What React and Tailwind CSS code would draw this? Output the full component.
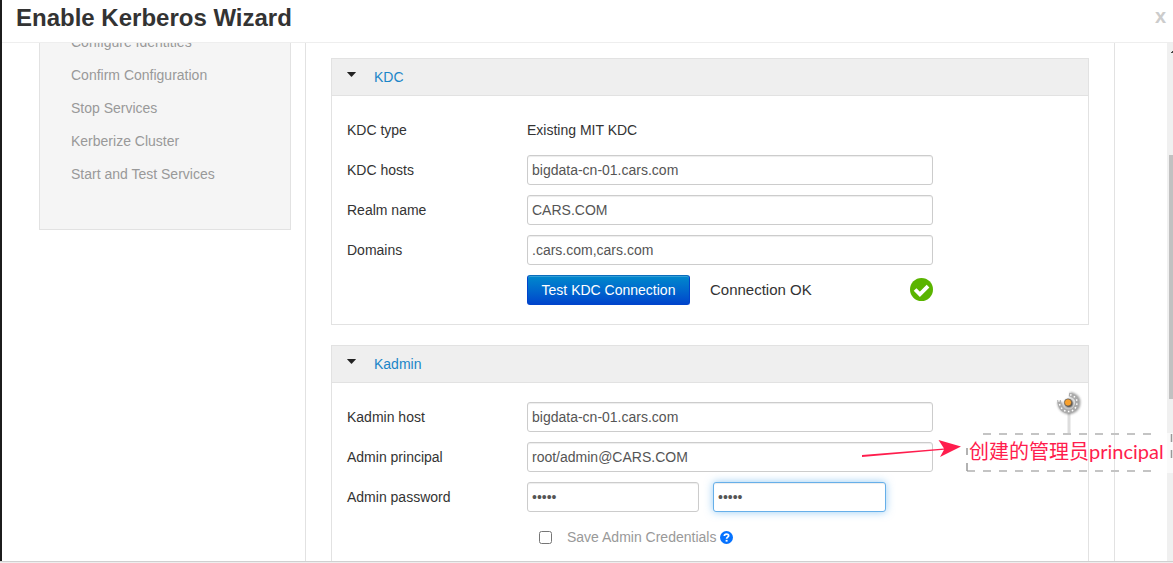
import React from "react";

const steps = [
  "Configure Identities",
  "Confirm Configuration",
  "Stop Services",
  "Kerberize Cluster",
  "Start and Test Services",
];

const fieldBase =
  "h-[30px] rounded-[3px] border px-1 text-sm text-[#555] bg-white outline-none ";
const fieldPlain =
  fieldBase + "border-[#ccc] shadow-[inset_0_1px_1px_rgba(0,0,0,0.075)]";
const fieldFocused =
  fieldBase +
  "border-[#66afe9] shadow-[inset_0_1px_1px_rgba(0,0,0,0.075),0_0_8px_rgba(82,168,236,0.6)]";

function Panel({ title, children }) {
  return (
    <section className="border border-[#e2e2e2]">
      <button
        type="button"
        className="flex h-[37px] w-full items-center border-b border-[#e2e2e2] bg-[#efefef] px-[15px] text-left text-sm text-[#1b86c8]"
      >
        <svg className="mb-[5px] mr-[18px] h-[5px] w-[9px]" viewBox="0 0 9 5" fill="#222" aria-hidden="true">
          <path d="M0.500 0h8q.5 0 .2.500L5 4.500q-.5.500-1 0L.3.500Q0 0 .5 0z" />
        </svg>
        {title}
      </button>
      <div className="flex flex-col gap-[10px] px-[15px] py-[19px]">{children}</div>
    </section>
  );
}

function Row({ label, htmlFor, children }) {
  const Label = htmlFor ? "label" : "span";
  return (
    <div className="flex h-[30px] items-center">
      <Label htmlFor={htmlFor} className="w-[180px] shrink-0">
        {label}
      </Label>
      <div className="flex w-[406px] items-center">{children}</div>
    </div>
  );
}

function TextRow({ label, id, value }) {
  return (
    <Row label={label} htmlFor={id}>
      <input id={id} type="text" defaultValue={value} className={fieldPlain + " w-full"} />
    </Row>
  );
}

function Annotation() {
  return (
    <div className="pointer-events-none absolute left-[860px] top-[390px]">
      <svg width="313" height="90" viewBox="0 0 313 90" aria-hidden="true">
        <defs>
          <filter id="soft" x="-50%" y="-50%" width="200%" height="200%">
            <feGaussianBlur stdDeviation="1.1" />
          </filter>
        </defs>
        <rect x="307" y="43" width="6" height="40" fill="#fafafa" />
        <g fill="none" stroke="#c4c4c4" strokeWidth="2">
          <path d="M123 44H292" strokeDasharray="8 8" />
          <path d="M107 81H292" strokeDasharray="8 8" />
          <path d="M107 58v7M107 73v8M311.500 44v8M311.500 60v8" strokeWidth="1.500" stroke="#999" />
        </g>
        <path d="M209 22V43" stroke="#ddd" strokeWidth="3" />
        <g fill="none">
          <path d="M200 12C200 25 218 25 218 12C218 8 214 5 210 4.500" stroke="#555" strokeWidth="5" opacity=".55" filter="url(#soft)" />
          <path d="M199 10C199 25 217 25 217 12C217 8 213 5 209 4.500" stroke="#aaa" strokeWidth="3.500" />
          <path d="M199 10C199 25 217 25 217 12C217 8 213 5 209 4.500" stroke="#fff" strokeWidth="1.500" strokeDasharray="1.500 2.500" />
          <circle cx="209" cy="13.500" r="4" fill="#333" filter="url(#soft)" />
          <circle cx="208" cy="12.500" r="3.600" fill="#f8a02c" stroke="#555" strokeWidth=".7" />
        </g>
        <path d="M2 65l82-6.500-5.500-8.500L101 56.500 80 67l4-7.200L2 67z" fill="#ff1d4d" />
      </svg>
      <span className="absolute left-[109px] top-[46px] whitespace-nowrap font-[Lato,'Noto_Sans_CJK_SC',sans-serif] text-[20px] leading-[30px] text-[#ff1d4d]">
        创建的管理员principal
      </span>
    </div>
  );
}

export default function App() {
  return (
    <div className="relative flex h-screen flex-col overflow-hidden bg-white font-['Liberation_Sans',Arial,sans-serif] text-sm text-[#333]">
      <div className="flex min-h-0 flex-1 flex-col border-l-2 border-[#1c1c1c]">
        <header className="flex h-[43px] shrink-0 items-center justify-between border-b border-[#eee] pb-[6px] pl-[14px] pr-[7px]">
          <h1 className="text-2xl font-bold">Enable Kerberos Wizard</h1>
          <button type="button" aria-label="Close" className="pb-1 text-xl font-bold text-[#ccc]">
            x
          </button>
        </header>

        <div className="flex min-h-0 flex-1 overflow-hidden">
          <nav className="ml-[37px] w-[252px] shrink-0">
            <ol className="-mt-[18px] border-x border-b border-[#e2e2e2] bg-[#f5f5f5] pb-[39px] pl-[31px] text-[#999]">
              {steps.map((step) => (
                <li key={step} className="flex h-[33px] items-center">
                  {step}
                </li>
              ))}
            </ol>
          </nav>

          <main className="ml-[14px] mr-[52px] flex min-w-0 flex-1 flex-col border-x border-[#e2e2e2] px-[25px] pt-[15px]">
            <form className="flex flex-col gap-5">
              <Panel title="KDC">
                <Row label="KDC type">Existing MIT KDC</Row>
                <TextRow label="KDC hosts" id="kdc-hosts" value="bigdata-cn-01.cars.com" />
                <TextRow label="Realm name" id="realm" value="CARS.COM" />
                <TextRow label="Domains" id="domains" value=".cars.com,cars.com" />
                <Row>
                  <button
                    type="button"
                    className="h-[30px] w-[163px] rounded-[3px] border border-[#0044cc] border-t-[#0a6dbd] bg-linear-to-b from-[#0088cc] to-[#0044cc] text-center text-sm whitespace-nowrap text-white shadow-[inset_0_1px_0_rgba(255,255,255,0.2)]"
                  >
                    Test KDC Connection
                  </button>
                  <span className="ml-5 text-[15px]">Connection OK</span>
                  <svg className="mb-px ml-auto h-[23px] w-[23px]" viewBox="0 0 24 24" aria-hidden="true">
                    <circle cx="12" cy="12" r="12" fill="#5ab400" />
                    <path d="M5.300 12l5 5 8.500-8.500" fill="none" stroke="#fff" strokeWidth="4" />
                  </svg>
                </Row>
              </Panel>

              <Panel title="Kadmin">
                <TextRow label="Kadmin host" id="kadmin-host" value="bigdata-cn-01.cars.com" />
                <TextRow label="Admin principal" id="principal" value="root/admin@CARS.COM" />
                <Row label="Admin password" htmlFor="password">
                  <input id="password" type="password" defaultValue="admin" className={fieldPlain + " w-[172px]"} />
                  <input
                    type="password"
                    aria-label="Confirm admin password"
                    defaultValue="admin"
                    className={fieldFocused + " ml-[14px] w-[173px]"}
                  />
                </Row>
                <div className="flex h-[30px] items-center pl-[192px] text-[#999]">
                  <input id="save" type="checkbox" className="h-[13px] w-[13px]" />
                  <label htmlFor="save" className="ml-[15px]">
                    Save Admin Credentials
                  </label>
                  <svg className="ml-1 h-[13px] w-[13px]" viewBox="0 0 12 12" aria-hidden="true">
                    <circle cx="6" cy="6" r="6" fill="#0572ff" />
                    <path d="M4 4.600C4.100 2.200 8 2.300 8 4.400 8 5.700 6.200 5.700 6.100 7.200" fill="none" stroke="#fff" strokeWidth="1.600" />
                    <path d="M5.200 8.200h1.800v1.600H5.200z" fill="#fff" />
                  </svg>
                </div>
              </Panel>
            </form>
          </main>

          <div className="flex w-[6px] shrink-0 flex-col bg-[#f0f0f0]" aria-hidden="true">
            <svg className="mt-2 h-[2px] w-full" viewBox="0 0 6 2">
              <path d="M4 2V1h1V0h1v2z" fill="#444" />
            </svg>
            <div className="ml-[2px] mt-[102px] h-[244px] bg-[#c1c1c1]" />
          </div>
        </div>
      </div>
      <div className="h-[2px] shrink-0 border-t border-[#d0d0d0] bg-[#eee]" />
      <Annotation />
    </div>
  );
}
